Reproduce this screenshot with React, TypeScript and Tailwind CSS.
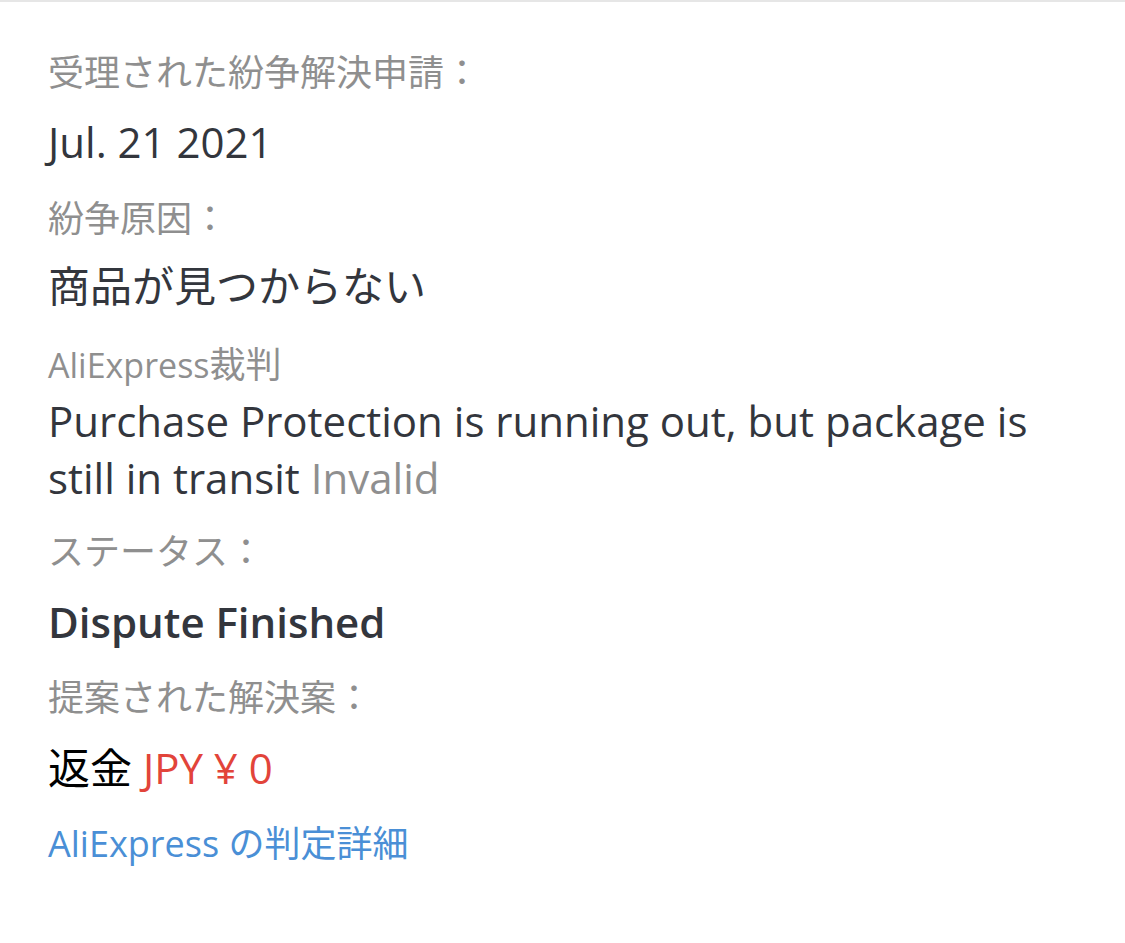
const latin = "font-['Open_Sans','Noto_Sans_CJK_JP',sans-serif]";

function Label({ children, className = '' }: { children: React.ReactNode; className?: string }) {
  return <div className={`text-[36px] leading-[48px] text-[#8f8f8f] ${className}`}>{children}</div>;
}

function Value({ children, className = '' }: { children: React.ReactNode; className?: string }) {
  return <div className={`text-[42px] leading-[57px] text-[#33363d] ${className}`}>{children}</div>;
}

export default function App() {
  return (
    <div className={`min-h-[943px] w-[1125px] bg-white border-t-2 border-[#e6e6e6] ${latin}`}>
      <div className="px-[48px] pt-[47px]">
        {/* Filed date */}
        <Label>受理された紛争解決申請：</Label>
        <Value className="mt-[16px]">Jul. 21 2021</Value>

        {/* Reason */}
        <Label className="mt-[25px]">紛争原因：</Label>
        <Value className="mt-[14px]">商品が見つからない</Value>

        {/* Verdict */}
        <Label className="mt-[27px]">
          <span className="text-[34px]">AliExpress</span>裁判
        </Label>
        <Value className="mt-[3px] pr-[40px]">
          Purchase Protection is running out, but package is still in transit{' '}
          <span className="text-[#8f8f8f]">Invalid</span>
        </Value>

        {/* Status */}
        <Label className="mt-[22px]">ステータス：</Label>
        <Value className="mt-[17px] font-semibold">Dispute Finished</Value>

        {/* Proposed solution */}
        <Label className="mt-[24px]">提案された解決案：</Label>
        <Value className="mt-[17px]">
          <span className="text-black">返金 </span>
          <span className="text-[#e2443a]">JPY ¥ 0</span>
        </Value>

        <a href="#" className="mt-[24px] block text-[36px] leading-[48px] text-[#4a8fd6]">
          AliExpress の判定詳細
        </a>
      </div>
    </div>
  );
}
